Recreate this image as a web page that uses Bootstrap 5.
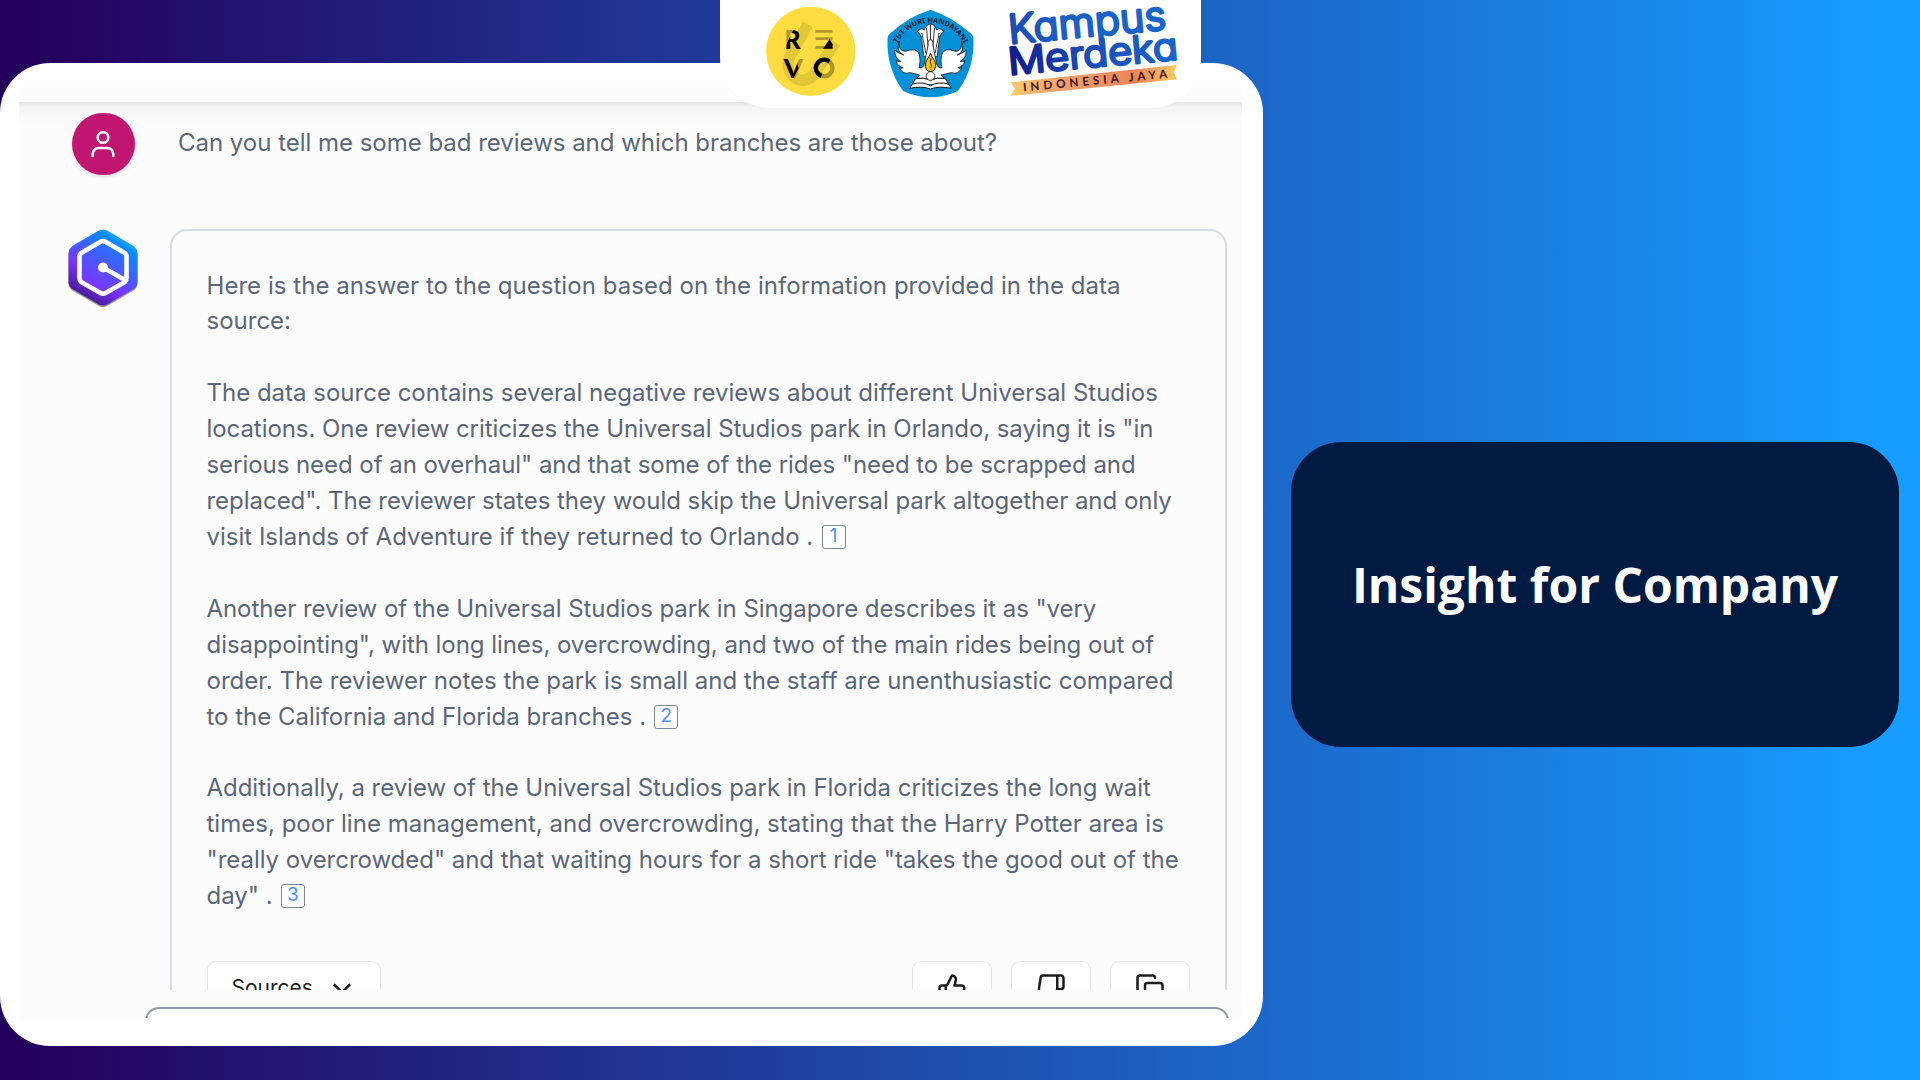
<!DOCTYPE html>
<html lang="en">
<head>
<meta charset="utf-8">
<title>Insight for Company</title>
<link href="https://cdn.jsdelivr.net/npm/bootstrap@5.3.0/dist/css/bootstrap.min.css" rel="stylesheet">
<script src="https://cdn.jsdelivr.net/npm/bootstrap@5.3.0/dist/js/bootstrap.bundle.min.js"></script>
<style>
body{width:1920px;height:1080px;background:linear-gradient(90deg,#24005c 0,#24005c 1%,#179cff 98%);font-family:Inter,sans-serif}
.panel{width:1263px;height:983.5px;margin-top:62.5px;border-radius:50px;padding:24.5px 21px 28.5px 18.5px}
.shot{background:#fcfcfc;padding-top:15px}
.chat{height:887.5px;background:linear-gradient(#e5e5e7 0,#f3f3f5 5px,#fafafb 14px,#fcfcfc 24px);padding-top:10.5px}
.pic-col{width:151px;padding-left:53.5px}
.person{width:62.5px;height:62.5px;background:#c01570;box-shadow:0 2px 4px #0002}
.ask{font-size:24px;line-height:36px;color:#5a667a;padding-left:8.5px;padding-top:12.5px;letter-spacing:-.02px}
.qrow{height:116px}
.hexa{margin-left:-4px}
.answer{width:1057px;height:900px;border:2px solid #d6dbe5;border-radius:17px;padding:37px 35px;font-size:24px;line-height:35.92px;color:#5a667a}
.answer p{margin:0 0 35.92px;white-space:nowrap}
.wide{letter-spacing:.045px}
.wide-2{letter-spacing:.02px}
.slim{letter-spacing:-.065px}
.slim-2{letter-spacing:-.05px}
.slim-3{letter-spacing:-.03px}
.cite{width:24px;height:24px;border:1.5px solid #7d8798;border-radius:3px;color:#4b93f7;font-size:19px;line-height:20px;background:#fff;vertical-align:3px;margin-left:1.5px}
.actions{margin-top:-24px;padding-top:35px}
.act{height:54px;border:1.5px solid #e6e6e6;border-radius:9px;background:#fff;color:#1c1c1e}
.src{width:174.5px;font-size:21px;padding:0 23px 0 24px}
.ico{width:80px}
.act-set{gap:19px}
.ask-box{height:28px;padding-top:17.5px}
.ask-in{margin-left:126px;width:1084px;height:40px;border:2px solid #9499a5;border-radius:14px;background:#fff}
.tab{left:719.5px;width:481.5px;height:107.7px;border-radius:0 0 50px 50px}
.side{margin-left:28px;margin-top:441.5px}
.tile{width:608px;height:305px;border-radius:50px;background:#001a41;color:#fff;font:700 48px "Open Sans",sans-serif;padding-bottom:20px}
.kampus{font-family:Inter,sans-serif;font-weight:300;font-feature-settings:"cv11"}
</style>
</head>
<body class="overflow-hidden position-relative">
<main class="d-flex align-items-start">
<section class="panel bg-white flex-shrink-0">
<div class="shot">
<div class="chat overflow-hidden">
<div class="qrow d-flex">
<div class="pic-col flex-shrink-0"><div class="person rounded-circle d-flex align-items-center justify-content-center"><svg width="26" height="30" viewBox="0 0 26 30" fill="none" stroke="#fff" stroke-width="2.5" stroke-linecap="round"><circle cx="13" cy="8.500" r="5.300"/><path d="M2.700 27v-2a6 6 0 0 1 6-6h8.600a6 6 0 0 1 6 6v2"/></svg></div></div>
<div class="ask">Can you tell me some bad reviews and which branches are those about?</div>
</div>
<div class="d-flex">
<div class="pic-col flex-shrink-0"><svg class="hexa" width="70" height="80" viewBox="0 0 70 80"><defs><linearGradient id="hx" x1=".85" y1=".1" x2=".35" y2=".95"><stop offset="0" stop-color="#36b3ff"/><stop offset=".15" stop-color="#068bff"/><stop offset=".7" stop-color="#7a32ff"/><stop offset="1" stop-color="#4b1c98"/></linearGradient><linearGradient id="hi" x1=".8" y1="0" x2=".3" y2="1"><stop offset="0" stop-color="#127fff"/><stop offset="1" stop-color="#8a2cff"/></linearGradient></defs>
<path d="M30 2q5-3 10 0l24 14q5.500 3 5.500 9v28q0 5-5.500 8L40 75q-5 3-10 0L6 61q-5.500-3-5.500-8V25q0-6 5.500-9z" fill="#999" transform="translate(0 1.500)"/>
<path d="M30 2q5-3 10 0l24 14q5.500 3 5.500 9v28q0 5-5.500 8L40 75q-5 3-10 0L6 61q-5.500-3-5.500-8V25q0-6 5.500-9z" fill="url(#hx)"/>
<path d="M32.500 12.800q2.500-1.500 5 0L56 23.500q2.500 1.500 2.500 4v21.500q0 3-2.500 4.500L37.500 64q-2.500 1.500-5 0L14 53.500q-2.500-1.500-2.500-4.500V27.500q0-2.500 2.500-4z" fill="url(#hi)" stroke="#fff" stroke-width="4.600"/><path d="M35 38.500L57 51" stroke="#fff" stroke-width="4.600"/><circle cx="35" cy="38.500" r="5" fill="#fff"/></svg></div>
<article class="answer">
<p><span class="wide">Here is the answer to the question based on the information provided in the data</span><br>source:</p>
<p>The data source contains several negative reviews about different Universal Studios<br><span class="slim">locations. One review criticizes the Universal Studios park in Orlando, saying it is "in</span><br><span class="slim-2">serious need of an overhaul" and that some of the rides "need to be scrapped and</span><br><span class="slim-3">replaced". The reviewer states they would skip the Universal park altogether and only</span><br>visit Islands of Adventure if they returned to Orlando . <span class="cite d-inline-flex justify-content-center">1</span></p>
<p><span class="slim">Another review of the Universal Studios park in Singapore describes it as "very</span><br><span class="slim-2">disappointing", with long lines, overcrowding, and two of the main rides being out of</span><br>order. The reviewer notes the park is small and the staff are unenthusiastic compared<br>to the California and Florida branches . <span class="cite d-inline-flex justify-content-center">2</span></p>
<p><span class="slim-3">Additionally, a review of the Universal Studios park in Florida criticizes the long wait</span><br><span class="wide-2">times, poor line management, and overcrowding, stating that the Harry Potter area is</span><br><span class="slim-3">"really overcrowded" and that waiting hours for a short ride "takes the good out of the</span><br>day" . <span class="cite d-inline-flex justify-content-center">3</span></p>
<div class="actions d-flex justify-content-between">
<div class="act src d-flex align-items-center justify-content-between">Sources<svg width="30" height="30" viewBox="0 0 24 24" fill="none" stroke="currentColor" stroke-width="2"><path d="M5.500 9l6.500 6.500L18.500 9"/></svg></div>
<div class="act-set d-flex">
<div class="act ico d-flex align-items-center justify-content-center"><svg width="30" height="30" viewBox="0 0 24 24" fill="none" stroke="currentColor" stroke-width="2" stroke-linejoin="round"><path d="M7 10v12M15 5.880 14 10h5.830a2 2 0 0 1 1.920 2.560l-2.330 8A2 2 0 0 1 17.500 22H4a2 2 0 0 1-2-2v-8a2 2 0 0 1 2-2h2.760a2 2 0 0 0 1.790-1.110L12 2a3.130 3.130 0 0 1 3 3.880Z"/></svg></div>
<div class="act ico d-flex align-items-center justify-content-center"><svg width="30" height="30" viewBox="0 0 24 24" fill="none" stroke="currentColor" stroke-width="2" stroke-linejoin="round"><path d="M10 15v4a3 3 0 0 0 3 3l4-9V2H5.720a2 2 0 0 0-2 1.700l-1.380 9a2 2 0 0 0 2 2.300zM17 2h2.670A2.310 2.310 0 0 1 22 4v7a2.310 2.310 0 0 1-2.330 2H17"/></svg></div>
<div class="act ico d-flex align-items-center justify-content-center"><svg width="30" height="30" viewBox="0 0 24 24" fill="none" stroke="currentColor" stroke-width="2" stroke-linecap="round"><rect x="8" y="8" width="14" height="14" rx="2"/><path d="M4 16c-1.100 0-2-.9-2-2V4c0-1.100.9-2 2-2h10c1.100 0 2 .9 2 2"/></svg></div>
</div></div>
</article>
</div></div>
<div class="ask-box overflow-hidden"><div class="ask-in"></div></div>
</div>
</section>
<aside class="side"><div class="tile d-flex align-items-center justify-content-center">Insight for Company</div></aside>
</main>
<div class="tab bg-white position-absolute top-0">
<svg class="d-block" width="481.500" height="107.700" viewBox="0 0 1444.500 323">
<defs>
<linearGradient id="kg" x1="0" y1="0" x2="1" y2="0"><stop offset="0" stop-color="#1c4bb0"/><stop offset=".3" stop-color="#1a5fc6"/><stop offset="1" stop-color="#1766cc"/></linearGradient>
<linearGradient id="mg" x1="0" y1="0" x2="1" y2="0"><stop offset="0" stop-color="#111b8c"/><stop offset=".45" stop-color="#1a4db6"/><stop offset="1" stop-color="#1766cc"/></linearGradient>
<linearGradient id="rb" x1="0" y1="0" x2="1" y2="0"><stop offset="0" stop-color="#fbcb68"/><stop offset=".3" stop-color="#f0a070"/><stop offset=".75" stop-color="#ea8455"/><stop offset="1" stop-color="#f9cb5f"/></linearGradient>
<clipPath id="dark"><path d="M104 62L125 80V135H70zM68 155H106L114 190 96 225H68zM150 155H215L176 225H150z"/></clipPath>
<path id="arc" d="M42 164A111 111 0 0 1 264 164"/>
</defs>
<!-- Revo -->
<g transform="translate(121.500 15)">
<circle cx="151" cy="139" r="134" fill="#ffdd40"/>
<path d="M142 58L88 154A42 46 0 0 0 166 200L225 113" fill="none" stroke="#e4c737" stroke-width="34"/>
<g font-family="Lato,sans-serif" font-weight="900" font-size="79" fill="#ae9729"><text x="72" y="131" textLength="48" lengthAdjust="spacingAndGlyphs">R</text><text x="70" y="218" textLength="58" lengthAdjust="spacingAndGlyphs">V</text></g>
<g fill="none" stroke="#ae9729"><path d="M165 79h51M165 101h51M165 127h51" stroke-width="8"/><circle cx="191" cy="189" r="25" stroke-width="13"/></g>
<g clip-path="url(#dark)"><g font-family="Lato,sans-serif" font-weight="900" font-size="79"><text x="72" y="131" textLength="48" lengthAdjust="spacingAndGlyphs">R</text><text x="70" y="218" textLength="58" lengthAdjust="spacingAndGlyphs">V</text></g>
<circle cx="191" cy="189" r="25" fill="none" stroke="#000" stroke-width="13"/></g>
<path d="M188 131L207 102 216 118V131z"/>
</g>
<!-- Tut Wuri Handayani -->
<g transform="translate(478.500 15)">
<path d="M146 17Q153 13 160 17 215 34 273 85 283 92 282 104 285 185 239 253 235 260 227 262 153 292 79 262 71 260 67 253 21 185 24 104 23 92 33 85 88 34 146 17z" fill="#0591d8"/>
<text font-family="Noto Sans,sans-serif" font-weight="700" font-size="22" text-anchor="middle" fill="#0c1c2a"><textPath href="#arc" startOffset="50%">TUT WURI HANDAYANI</textPath></text>
<g transform="translate(3 0)">
<g fill="#fff" stroke="#111" stroke-width="2.500" stroke-linejoin="round">
<path d="M110 78l14-8 7 5 8-14 11-5 11 5 8 14 7-5 14 8-12 15-8 62h-40l-8-62z"/>
<path d="M124 84l12 60M138 68l6 70M150 58v62M162 68l-6 70M176 84l-12 60" fill="none"/>
<path d="M56 108Q46 142 70 150 45 140 43 135 42 160 61 169 50 170 47 167 50 184 68 188 58 192 56 188 66 210 88 203L118 210 108 220H192L182 210 212 203Q234 210 244 188 242 192 232 188 250 184 253 167 250 170 239 169 258 160 257 135 255 140 230 150 254 142 244 108L242 128Q236 139 226 139 190 125 183 150 179 166 184 188 172 192 168 174L157 120Q159 104 150 104 141 104 143 120L132 174Q128 192 116 188 121 166 117 150 110 125 74 139 62 139 57 128z"/>
<path d="M88 250l17-29q24-5 45 4 21-9 45-4l17 29q-35-8-62 2-27-10-62-2zM96 237q31-8 54 5 23-13 54-5" stroke-width="3"/>
<circle cx="150" cy="213" r="13"/>
</g>
<path d="M150 145q4 10 12 22 10 20-6 32h-12q-16-12-6-32 8-12 12-22z" fill="#f8c412" stroke="#111" stroke-width="3"/>
<path d="M152 158q-6 14 0 20 3 6-2 12" fill="none" stroke="#111" stroke-width="2.500"/>
</g></g>
<!-- Kampus Merdeka -->
<g transform="translate(781.500 0)">
<g class="kampus" stroke-width="8" stroke-linejoin="round">
<text transform="translate(87 131) rotate(-5.200)" font-size="120" textLength="474" lengthAdjust="spacingAndGlyphs" fill="url(#kg)" stroke="url(#kg)">Kampus</text>
<text transform="translate(86 224) rotate(-5.200)" font-size="112" textLength="511" lengthAdjust="spacingAndGlyphs" fill="url(#mg)" stroke="url(#mg)">Merdeka</text>
</g>
<path d="M90 247L590 195 580 217 590 238 90 288 103 267z" fill="url(#rb)"/>
<text transform="translate(129 274) rotate(-5.400)" font-family="Lato,sans-serif" font-weight="700" font-size="35" textLength="434" fill="#3c1422">INDONESIA JAYA</text>
</g>
</svg>
</div>
</body>
</html>
